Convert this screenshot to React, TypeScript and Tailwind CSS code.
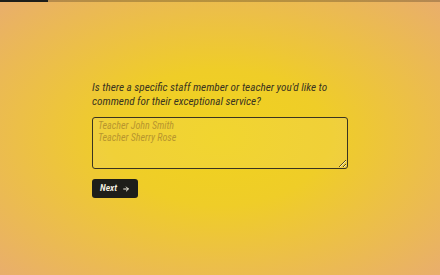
export default function App() {
  return (
    <div className="relative h-[275px] w-[440px] overflow-hidden bg-[radial-gradient(ellipse_at_center,#f0d21e_0%,#efcd28_35%,#ecbf48_65%,#e9ae6c_100%)] font-['Roboto_Condensed','Roboto',sans-serif]">
      <div className="absolute left-0 top-0 h-[2px] w-full bg-[#3a2f1a]/30">
        <div className="h-full w-[48px] bg-[#1e1e1a]" />
      </div>
      <div className="flex h-full items-center justify-center pt-[4px]">
        <div className="flex w-[256px] flex-col">
          <p className="text-[11.2px] italic leading-[14px] text-[#3a3420]">
            Is there a specific staff member or teacher you'd like to commend for their exceptional service?
          </p>
          <textarea
            className="mt-[8px] h-[52px] w-full resize-y rounded-[3px] border border-[#3a3420] bg-white/[0.08] px-[5px] py-[2px] text-[10px] italic leading-[11.5px] text-[#3a3420] outline-none placeholder:text-[#b8962e]"
            placeholder={'Teacher John Smith\nTeacher Sherry Rose'}
          />
          <div className="mt-[10px]">
            <button className="flex h-[19px] items-center gap-[5px] rounded-[3px] bg-[#1e1e1a] px-[8px] text-[9.5px] font-semibold italic text-[#f3efe0]">
              Next
              <svg width="8" height="8" viewBox="0 0 24 24" fill="none" stroke="currentColor" strokeWidth="3" strokeLinecap="round" strokeLinejoin="round">
                <path d="M5 12h14M13 6l6 6-6 6" />
              </svg>
            </button>
          </div>
        </div>
      </div>
    </div>
  );
}
